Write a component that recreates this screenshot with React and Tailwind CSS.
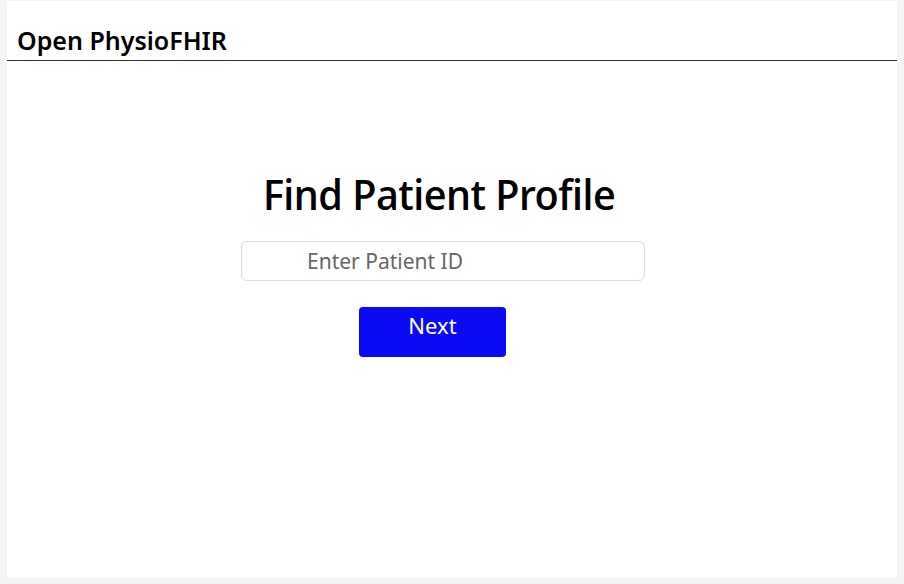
export default function App() {
  return (
    <div className="h-[584px] w-full bg-[#f4f4f4] px-[7px] pt-[1px] pb-[6px] font-['Noto_Sans',sans-serif]">
      <div className="h-full bg-white flex flex-col">
        <header className="h-[60px] border-b border-[#333] flex items-end pl-[10px] pb-[7px]">
          <span className="text-[25px] font-semibold text-black leading-none">Open PhysioFHIR</span>
        </header>
        <main className="flex flex-col items-start">
          <h1 className="ml-[256px] mt-[112px] text-[42px] font-medium tracking-[-0.5px] text-black leading-none font-['Noto_Sans_Display','Noto_Sans',sans-serif]">
            Find Patient Profile
          </h1>
          <input
            placeholder="Enter Patient ID"
            className="ml-[234px] mt-[26px] w-[404px] h-[40px] rounded-[6px] border border-[#dcdcdc] pl-[65px] text-[21px] text-black placeholder:text-[#666] outline-none"
          />
          <button className="ml-[352px] mt-[26px] w-[147px] h-[50px] rounded-[4px] bg-[#0a0af5] text-white text-[22px] leading-[30px] pt-[3px] flex justify-center items-start">
            Next
          </button>
        </main>
      </div>
    </div>
  );
}
